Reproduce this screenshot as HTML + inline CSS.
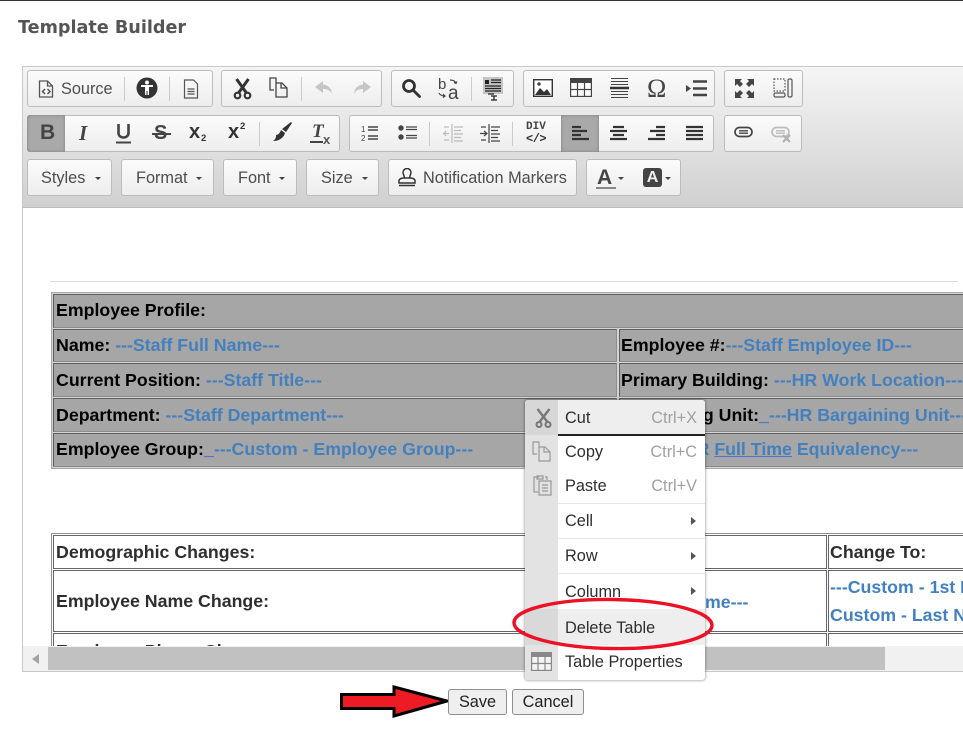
<!DOCTYPE html>
<html><head><meta charset="utf-8"><title>Template Builder</title>
<style>
html,body{margin:0;padding:0;background:#fff}
#p{position:relative;width:963px;height:736px;overflow:hidden;background:#fff;font-family:"Liberation Sans",sans-serif;filter:blur(.3px)}
#p div,#p svg{position:absolute}
.g{background:linear-gradient(#fbfbfb,#ededed);border:1px solid #bcbcbc;border-radius:3px;box-sizing:border-box}
.t{font-size:16.3px;color:#4d4d4d;white-space:nowrap;line-height:18px}
.s{width:1px;background:#cbcbcb}
.c{background:#a6a6a6;border:1px solid;border-color:#5f5f5f #8c8c8c #8c8c8c #5f5f5f;box-sizing:border-box}
.w{background:#fff;border:1px solid #666;box-sizing:border-box}
.b{font-size:17.75px;font-weight:bold;color:#000;white-space:nowrap;line-height:20px}
.d{color:#2e2e2e}
.l{color:#4480bd}
.m{font-size:16.3px;color:#2e2e2e;white-space:nowrap;line-height:18px;left:565px}
.k{font-size:16.3px;color:#a0a0a0;white-space:nowrap;line-height:18px;right:266px}
.sep{left:558px;width:147px;height:1px;background:#e6e6e6}
.ar{left:691px;width:0;height:0;border-left:5px solid #555;border-top:4px solid transparent;border-bottom:4px solid transparent}
.dd{width:0;height:0;border-top:3px solid #444;border-left:3px solid transparent;border-right:3px solid transparent}
</style></head><body><div id="p">
<div style="left:0;top:0;width:963px;height:1px;background:#333"></div>
<div style="left:18px;top:17px;font:bold 17.6px/22px 'DejaVu Sans',sans-serif;color:#555;white-space:nowrap">Template Builder</div>

<!-- editor frame -->
<div style="left:22px;top:66px;width:941px;height:606px;border:1px solid #c8c8c8;border-right:0;box-sizing:border-box;background:#fff"></div>
<div style="left:23px;top:67px;width:940px;height:141px;background:linear-gradient(#f5f5f5,#cfd0cf);border-bottom:1px solid #bbb;box-sizing:border-box"></div>

<!-- row 1 groups -->
<div class="g" style="left:27px;top:70px;width:186px;height:37px"></div>
<div class="g" style="left:221px;top:70px;width:161px;height:37px"></div>
<div class="g" style="left:391px;top:70px;width:123px;height:37px"></div>
<div class="g" style="left:523px;top:70px;width:192px;height:37px"></div>
<div class="g" style="left:724px;top:70px;width:79px;height:37px"></div>
<!-- row 2 groups -->
<div class="g" style="left:27px;top:115px;width:313px;height:37px"></div>
<div class="g" style="left:349px;top:115px;width:365px;height:37px"></div>
<div class="g" style="left:724px;top:115px;width:78px;height:37px"></div>
<!-- row 3 -->
<div class="g" style="left:27px;top:159px;width:85px;height:37px"></div>
<div class="g" style="left:121px;top:159px;width:93px;height:37px"></div>
<div class="g" style="left:223px;top:159px;width:74px;height:37px"></div>
<div class="g" style="left:306px;top:159px;width:73px;height:37px"></div>
<div class="g" style="left:388px;top:159px;width:189px;height:37px"></div>
<div class="g" style="left:586px;top:159px;width:95px;height:37px"></div>

<!-- active buttons -->
<div style="left:27px;top:115px;width:38px;height:37px;background:#a9a9a9;border-radius:3px 0 0 3px;box-shadow:inset 0 0 3px #7c7c7c"></div>
<div style="left:561px;top:115px;width:38px;height:37px;background:#a9a9a9;box-shadow:inset 0 0 3px #7c7c7c"></div>

<!-- separators -->
<div class="s" style="left:124px;top:77px;height:24px"></div>
<div class="s" style="left:169px;top:77px;height:24px"></div>
<div class="s" style="left:301px;top:77px;height:24px"></div>
<div class="s" style="left:471px;top:77px;height:24px"></div>
<div class="s" style="left:259px;top:122px;height:24px"></div>
<div class="s" style="left:429px;top:122px;height:24px"></div>
<div class="s" style="left:512px;top:122px;height:24px"></div>

<!-- row 1 labels & icons -->
<svg style="left:38px;top:80px" width="16" height="18" viewBox="0 0 16 18" fill="none" stroke="#555" stroke-width="1.3"><path d="M1.500 1h8l5 5v11h-13zM9.500 1v5h5"/><path d="M7 9l-2.500 2.500L7 14M9.500 9l2.500 2.500L9.500 14" stroke-width="1.500"/></svg>
<div class="t" style="left:61px;top:80px">Source</div>
<svg style="left:136px;top:77px" width="22" height="22" viewBox="0 0 22 22"><circle cx="11" cy="11" r="10.500" fill="#333"/><circle cx="11" cy="5.500" r="2" fill="#fff"/><path d="M5 8h12v2h-4v8h-1.500v-4h-1v4H9v-8H5z" fill="#fff"/></svg>
<svg style="left:183px;top:79px" width="16" height="20" viewBox="0 0 16 20" fill="none" stroke="#555" stroke-width="1.200"><path d="M1.500 1h9l4 4v14h-13zM4.500 10h7M4.500 12.500h7M4.500 15h7"/></svg>
<svg style="left:233px;top:78px" width="19" height="22" viewBox="0 0 19 22" fill="none" stroke="#333" stroke-width="3"><path d="M3.500 1l10 14M15.500 1l-10 14"/><circle cx="4.500" cy="17.500" r="2.800" stroke-width="2.200"/><circle cx="14.500" cy="17.500" r="2.800" stroke-width="2.200"/></svg>
<svg style="left:269px;top:77px" width="19" height="21" viewBox="0 0 19 21" fill="none" stroke="#444" stroke-width="1.300"><path d="M7 6V1H1v12h4M7 6h6l5 5v9H7zM12 6v5h6"/></svg>
<svg style="left:314px;top:81px" width="20" height="15" viewBox="0 0 20 15" fill="#c6c6c6"><path d="M9 0L1 6l8 6V8c4 0 7 1 9 5-.500-6-4-9-9-9.500z"/></svg>
<svg style="left:352px;top:81px" width="20" height="15" viewBox="0 0 20 15" fill="#c6c6c6"><path d="M11 0l8 6-8 6V8c-4 0-7 1-9 5 .500-6 4-9 9-9.500z"/></svg>
<svg style="left:401px;top:78px" width="20" height="20" viewBox="0 0 20 20" fill="none" stroke="#333" stroke-width="2.800"><circle cx="8" cy="8" r="5.500"/><path d="M12 12l6.500 6.500" stroke-linecap="round"/></svg>
<div style="left:438px;top:77px;font:15px/15px 'Liberation Sans',sans-serif;color:#444">b</div>
<div style="left:448px;top:84px;font:19px/19px 'Liberation Sans',sans-serif;color:#444">a</div>
<svg style="left:438px;top:79px" width="24" height="22" viewBox="0 0 24 22" fill="none" stroke="#444" stroke-width="1.200"><path d="M12 1c3 0 5 1 6 3M16 3.500l2 1 1-2M1 14c1 2 3 3 6 3M5 15l2 2-2 1.500"/></svg>
<svg style="left:483px;top:77px" width="20" height="24" viewBox="0 0 20 24"><rect x="0" y="0" width="20" height="17" fill="#c5c5c5"/><path d="M2 3h4v4H2z" fill="#222"/><path d="M8 3h10M8 5.500h10M2 9h16M2 11.500h16M2 14h16M5 17h6" stroke="#222" stroke-width="1.200"/><path d="M8 19h6M11 19v4M8 23h6" stroke="#222" stroke-width="1.300"/></svg>
<svg style="left:533px;top:79px" width="20" height="18" viewBox="0 0 20 18"><rect x=".7" y=".7" width="18.600" height="16.600" fill="#fff" stroke="#333" stroke-width="1.400"/><path d="M2 16l5-7 4 4 3-3 4 6z" fill="#333"/><circle cx="6" cy="5" r="1.700" fill="#444"/></svg>
<svg style="left:570px;top:78px" width="22" height="19" viewBox="0 0 22 19" fill="none" stroke="#444" stroke-width="1.200"><rect x=".6" y=".6" width="20.800" height="17.800" fill="#fff"/><rect x="0" y="0" width="22" height="5" fill="#444" stroke="none"/><path d="M7.500 5v13M14.500 5v13M1 11.500h20"/></svg>
<svg style="left:610px;top:77px" width="19" height="23" viewBox="0 0 19 23" stroke="#444"><path d="M1 1.500h17M1 4.500h17M1 7.500h17M1 14.500h17M1 17.500h17M1 20.500h17" stroke-width="1"/><path d="M0 11h19" stroke-width="2.400" stroke="#333"/></svg>
<div style="left:647px;top:76px;font:26px/26px 'Liberation Serif',serif;color:#444">Ω</div>
<svg style="left:686px;top:80px" width="22" height="17" viewBox="0 0 22 17"><path d="M0 5l5 3.500L0 12z" fill="#444"/><path d="M7 1.500h14M7 8.500h14M7 15h14" stroke="#444" stroke-width="2.400"/></svg>
<svg style="left:735px;top:79px" width="19" height="19" viewBox="0 0 19 19" fill="#444"><path d="M0 0h7L5 2l3 3-3 3-3-3-2 2zM19 0v7l-2-2-3 3-3-3 3-3-2-2zM0 19v-7l2 2 3-3 3 3-3 3 2 2zM19 19h-7l2-2-3-3 3-3 3 3 2-2z"/></svg>
<svg style="left:773px;top:78px" width="20" height="20" viewBox="0 0 20 20" fill="none" stroke="#555" stroke-width="1.200"><rect x="1" y="1" width="11" height="12" stroke-dasharray="1.500 1.500"/><rect x="15" y="1" width="4" height="18" rx="1.500"/><rect x="1" y="15" width="11" height="4" rx="1.500"/></svg>

<!-- row 2 -->
<div style="left:40px;top:121px;font:bold 21px/24px 'Liberation Sans',sans-serif;color:#444">B</div>
<div style="left:79px;top:121px;font:italic bold 21px/24px 'Liberation Serif',serif;color:#444">I</div>
<svg style="left:115px;top:124px" width="17" height="20" viewBox="0 0 17 20" fill="none" stroke="#444"><path d="M3.500 0v9c0 6 10 6 10 0V0" stroke-width="2.600"/><path d="M1 18.500h15" stroke-width="2"/></svg>
<div style="left:154px;top:122px;font:bold 20px/23px 'Liberation Sans',sans-serif;color:#444">S</div>
<div style="left:152px;top:133px;width:19px;height:2px;background:#444"></div>
<div style="left:189px;top:121px;font:bold 20px/23px 'Liberation Sans',sans-serif;color:#333">x</div>
<div style="left:201px;top:134px;font:bold 9.500px/10px 'Liberation Sans',sans-serif;color:#333">2</div>
<div style="left:228px;top:121px;font:bold 20px/23px 'Liberation Sans',sans-serif;color:#333">x</div>
<div style="left:240px;top:122px;font:bold 9.500px/10px 'Liberation Sans',sans-serif;color:#333">2</div>
<svg style="left:272px;top:122px" width="20" height="21" viewBox="0 0 20 21" fill="#333"><path d="M19 0l1 1-6 9-4-3zM9 8l4 3c-1 4-5 8-12 8 3-2 3-4 3-6 2 0 4-2 5-5z"/></svg>
<div style="left:312px;top:122px;font:italic bold 19px/20px 'Liberation Serif',serif;color:#444">T</div>
<div style="left:310px;top:141px;width:13px;height:2px;background:#444"></div>
<div style="left:323px;top:134px;font:bold 13px/12px 'Liberation Sans',sans-serif;color:#555">x</div>
<svg style="left:361px;top:124px" width="17" height="18" viewBox="0 0 17 18"><path d="M7 3h10M7 6h10M7 12h10M7 15h10" stroke="#444" stroke-width="1.400"/><text x="0" y="8" font-size="8" font-family="Liberation Sans" fill="#444">1</text><text x="0" y="17" font-size="8" font-family="Liberation Sans" fill="#444">2</text></svg>
<svg style="left:398px;top:125px" width="19" height="15" viewBox="0 0 19 15"><circle cx="3" cy="3" r="2.700" fill="#444"/><circle cx="3" cy="12" r="2.700" fill="#444"/><path d="M8 2h11M8 4.500h11M8 10.500h11M8 13h11" stroke="#444" stroke-width="1.300"/></svg>
<svg style="left:443px;top:124px" width="20" height="19" viewBox="0 0 20 19" stroke="#bbb" fill="none" stroke-width="1.200"><path d="M9 0v19M0 9.500h6M3 7l-2 2.500 2 2.500M11 3h9M11 6.500h7M11 10h9M11 13.500h7M11 17h9M1 3h5M1 16h5"/></svg>
<svg style="left:480px;top:124px" width="20" height="19" viewBox="0 0 20 19" stroke="#444" fill="none" stroke-width="1.200"><path d="M9 0v19M0 9.500h7M4 7l3 2.500-3 2.500M11 3h9M11 6.500h7M11 10h9M11 13.500h7M11 17h9M1 3h5M1 16h5"/></svg>
<div style="left:526px;top:122px;font:bold 11px/11px 'Liberation Mono',monospace;color:#444">DIV</div>
<div style="left:526px;top:133px;font:bold 12px/12px 'Liberation Mono',monospace;color:#333;letter-spacing:-.5px">&lt;/&gt;</div>
<svg style="left:572px;top:125px" width="17" height="16" viewBox="0 0 17 16" stroke="#333" stroke-width="2.300"><path d="M0 2h9M0 6h15M0 10h9M0 14h17"/></svg>
<svg style="left:610px;top:125px" width="17" height="16" viewBox="0 0 17 16" stroke="#333" stroke-width="2.300"><path d="M3 2h11M0 6h17M3 10h11M0 14h17"/></svg>
<svg style="left:648px;top:125px" width="17" height="16" viewBox="0 0 17 16" stroke="#333" stroke-width="2.300"><path d="M8 2h9M2 6h15M8 10h9M0 14h17"/></svg>
<svg style="left:686px;top:125px" width="17" height="16" viewBox="0 0 17 16" stroke="#333" stroke-width="2.300"><path d="M0 2h17M0 6h17M0 10h17M0 14h17"/></svg>
<svg style="left:734px;top:126px" width="19" height="12" viewBox="0 0 19 12" fill="none" stroke="#444" stroke-width="1.700"><rect x="1" y="1.500" width="17" height="9" rx="4.500"/><path d="M5 4.800h9M5 7.200h9" stroke-width="1.400"/></svg>
<svg style="left:771px;top:126px" width="21" height="17" viewBox="0 0 21 17" fill="none" stroke="#bbb" stroke-width="1.700"><rect x="1" y="1.500" width="17" height="9" rx="4.500"/><path d="M5 4.800h9M5 7.200h9" stroke-width="1.400"/><path d="M12 9l7 7M19 9l-7 7" stroke-width="2.200" stroke="#b0b0b0"/></svg>

<!-- row 3 -->
<div class="t" style="left:41px;top:169px">Styles</div><div class="dd" style="left:95px;top:177px"></div>
<div class="t" style="left:136px;top:169px">Format</div><div class="dd" style="left:196px;top:177px"></div>
<div class="t" style="left:238px;top:169px">Font</div><div class="dd" style="left:279px;top:177px"></div>
<div class="t" style="left:321px;top:169px">Size</div><div class="dd" style="left:362px;top:177px"></div>
<svg style="left:398px;top:168px" width="18" height="19" viewBox="0 0 18 19" fill="none" stroke="#333" stroke-width="1.500"><path d="M6.500 10C6 7 5 6 5 4.500a4 4 0 0 1 8 0C13 6 12 7 11.500 10M1 13c0-2 2-3 5.500-3h5c3.500 0 5.500 1 5.500 3v2H1zM1 17.500h16"/></svg>
<div class="t" style="left:423px;top:169px">Notification Markers</div>
<div style="left:597px;top:166px;font:bold 21px/23px 'Liberation Sans',sans-serif;color:#444">A</div>
<div style="left:596px;top:187px;width:20px;height:2px;background:#888"></div>
<div class="dd" style="left:618px;top:177px"></div>
<div style="left:643px;top:168px;width:19px;height:19px;background:#444;border-radius:3px;color:#eee;font:bold 16px/19px 'Liberation Sans',sans-serif;text-align:center">A</div>
<div class="dd" style="left:665px;top:177px"></div>

<!-- content -->
<div style="left:50px;top:281px;width:908px;height:1px;background:#dcdcdc"></div>
<div id="view" style="left:23px;top:208px;width:940px;height:438px;overflow:hidden">
 <div style="left:28px;top:84px;width:930px;height:177px;border:1px solid #a8a8a8;background:#d4d4d4;box-sizing:border-box"></div>
 <div class="c" style="left:30px;top:86px;width:920px;height:34px"></div>
 <div class="c" style="left:30px;top:121px;width:564px;height:33px"></div>
 <div class="c" style="left:596px;top:121px;width:354px;height:33px"></div>
 <div class="c" style="left:30px;top:155px;width:564px;height:34px"></div>
 <div class="c" style="left:596px;top:155px;width:354px;height:34px"></div>
 <div class="c" style="left:30px;top:190px;width:564px;height:34px"></div>
 <div class="c" style="left:596px;top:190px;width:354px;height:34px"></div>
 <div class="c" style="left:30px;top:225px;width:564px;height:34px"></div>
 <div class="c" style="left:596px;top:225px;width:354px;height:34px"></div>
 <div class="b" style="left:33px;top:92px">Employee Profile:</div>
 <div class="b" style="left:33px;top:127px">Name: <span class="l">---Staff Full Name---</span></div>
 <div class="b" style="left:598px;top:127px">Employee #:<span class="l">---Staff Employee ID---</span></div>
 <div class="b" style="left:33px;top:162px">Current Position: <span class="l">---Staff Title---</span></div>
 <div class="b" style="left:598px;top:162px">Primary Building: <span class="l">---HR Work Location---</span></div>
 <div class="b" style="left:33px;top:197px">Department: <span class="l">---Staff Department---</span></div>
 <div class="b" style="left:598px;top:197px">Bargaining Unit:<span class="l"><u style="color:#5a6fd0">_</u>---HR Bargaining Unit---</span></div>
 <div class="b" style="left:33px;top:231px">Employee Group:<span class="l"><u style="color:#5a6fd0">_</u>---Custom - Employee Group---</span></div>
 <div class="b" style="left:643px;top:231px"><span class="l">---HR <u style="text-decoration-color:#5a6fd0">Full Time</u> Equivalency---</span></div>

 <div style="left:28px;top:325px;width:935px;height:120px;border:1px solid #8f8f8f;border-bottom:0;border-right:0;box-sizing:border-box"></div>
 <div class="w" style="left:30px;top:327px;width:774px;height:34px"></div>
 <div class="w" style="left:805px;top:327px;width:140px;height:34px;border-right:0"></div>
 <div class="w" style="left:30px;top:362px;width:774px;height:62px"></div>
 <div class="w" style="left:805px;top:362px;width:140px;height:62px;border-right:0"></div>
 <div class="w" style="left:30px;top:425px;width:774px;height:40px"></div>
 <div class="w" style="left:805px;top:425px;width:140px;height:40px;border-right:0"></div>
 <div class="b d" style="left:33px;top:334px">Demographic Changes:</div>
 <div class="b d" style="left:807px;top:334px">Change To:</div>
 <div class="b d" style="left:33px;top:383px">Employee Name Change:</div>
 <div class="b l" style="left:682px;top:384px">me---</div>
 <div class="b l" style="left:807px;top:369px">---Custom - 1st Name---</div>
 <div class="b l" style="left:807px;top:397px">Custom - Last Name---</div>
 <div class="b d" style="left:33px;top:433px">Employee Phone Change:</div>
</div>

<!-- scrollbar -->
<div style="left:23px;top:646px;width:940px;height:25px;background:#f1f1f1"></div>
<div style="left:48px;top:647px;width:837px;height:23px;background:#c1c1c1"></div>
<div style="left:32px;top:654px;width:0;height:0;border-right:7px solid #a3a3a3;border-top:5.500px solid transparent;border-bottom:5.500px solid transparent"></div>

<!-- context menu -->
<div style="left:525px;top:400px;width:180px;height:280px;background:#fff;border-radius:3px;box-shadow:0 0 2px 1px rgba(0,0,0,.28);overflow:hidden">
 <div style="left:0;top:0;width:33px;height:280px;background:#e3e3e3"></div>
 <div style="left:0;top:0;width:180px;height:35px;background:#eee"></div>
 <div style="left:0;top:0;width:33px;height:35px;background:#d7d7d7"></div>
 <div style="left:33px;top:34px;width:147px;height:2px;background:#222"></div>
 <div style="left:33px;top:209px;width:147px;height:36px;background:#eee"></div>
 <div style="left:0;top:209px;width:33px;height:36px;background:#d9d9d9"></div>
</div>
<div class="sep" style="top:503px"></div>
<div class="sep" style="top:538px"></div>
<div class="sep" style="top:573px"></div>
<svg style="left:535px;top:408px" width="17" height="20" viewBox="0 0 17 20" fill="none" stroke="#777" stroke-width="2.400"><path d="M2.500 1l10 13M14.500 1l-10 13"/><circle cx="4" cy="16.500" r="2.500" stroke-width="2"/><circle cx="13" cy="16.500" r="2.500" stroke-width="2"/></svg>
<svg style="left:532px;top:441px" width="19" height="21" viewBox="0 0 19 21" fill="none" stroke="#999" stroke-width="1.200"><path d="M7 6V1H1v12h4M7 6h6l5 5v9H7zM12 6v5h6"/></svg>
<svg style="left:533px;top:475px" width="19" height="21" viewBox="0 0 19 21" fill="none" stroke="#999" stroke-width="1.200"><path d="M6 2H1v15h4M12 2h2v3M4 1h6v3H4zM6 6h12v14H6zM9 10h6M9 13h6M9 16h6"/></svg>
<svg style="left:531px;top:652px" width="21" height="19" viewBox="0 0 21 19" fill="none" stroke="#888" stroke-width="1.200"><rect x=".6" y=".6" width="19.800" height="17.800" fill="#f4f4f4"/><rect width="21" height="5" fill="#888" stroke="none"/><path d="M7 5v13M14 5v13M1 11.500h19"/></svg>
<div class="m" style="top:409px">Cut</div><div class="k" style="top:409px">Ctrl+X</div>
<div class="m" style="top:443px">Copy</div><div class="k" style="top:443px">Ctrl+C</div>
<div class="m" style="top:477px">Paste</div><div class="k" style="top:477px">Ctrl+V</div>
<div class="m" style="top:512px">Cell</div><div class="ar" style="top:517px"></div>
<div class="m" style="top:547px">Row</div><div class="ar" style="top:552px"></div>
<div class="m" style="top:583px">Column</div><div class="ar" style="top:587px"></div>
<div class="m" style="top:619px">Delete Table</div>
<div class="m" style="top:653px">Table Properties</div>

<!-- annotations -->
<svg style="left:510px;top:596px" width="206" height="56" viewBox="0 0 206 56"><ellipse cx="103" cy="28" rx="99" ry="24.500" fill="none" stroke="#ed1126" stroke-width="3.400" transform="rotate(.8 103 28)"/></svg>
<svg style="left:338px;top:683px" width="112" height="37" viewBox="0 0 112 37"><path d="M3.500 11.500H56V4l53 14L56 33v-7.500H3.500z" fill="#ed1c24" stroke="#000" stroke-width="3"/></svg>

<!-- buttons -->
<div style="left:448px;top:689px;width:59px;height:26px;background:#efefef;border:1px solid #8f8f8f;border-radius:3px;box-sizing:border-box;font-size:16.3px;line-height:24px;text-align:center;color:#222">Save</div>
<div style="left:512px;top:689px;width:72px;height:26px;background:#efefef;border:1px solid #8f8f8f;border-radius:3px;box-sizing:border-box;font-size:16.3px;line-height:24px;text-align:center;color:#222">Cancel</div>
</div></body></html>
